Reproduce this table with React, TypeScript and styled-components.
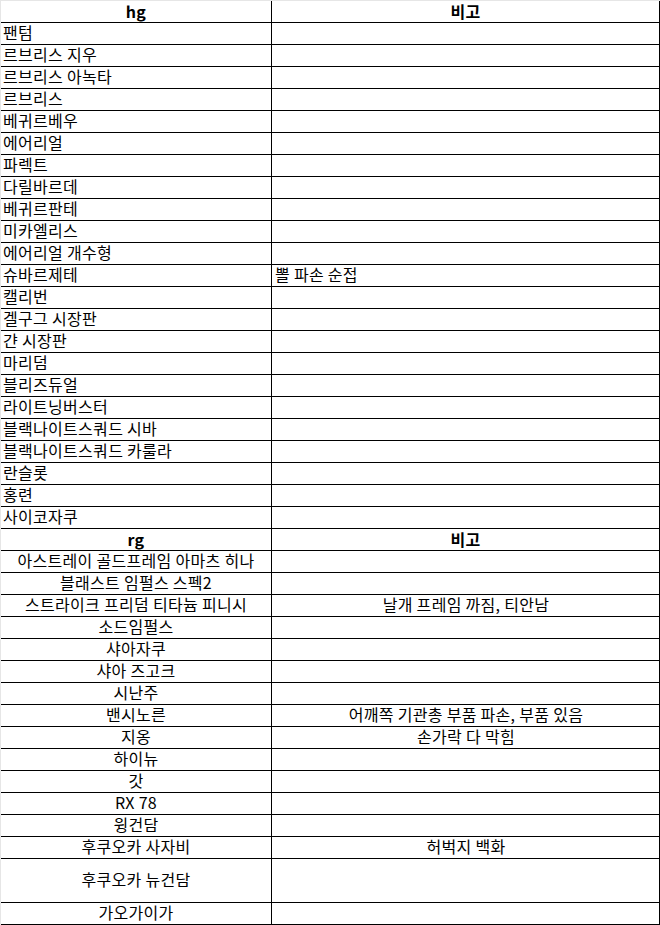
import React from "react";
import styled, { createGlobalStyle } from "styled-components";

const GlobalStyle = createGlobalStyle`
  html, body {
    margin: 0;
    padding: 0;
    background: #fff;
  }
  body {
    font-family: "Noto Sans CJK KR", "Noto Sans", sans-serif;
    color: #000;
  }
`;

const Sheet = styled.div`
  width: 660px;
  border-top: 1px solid #e6e6e6;
  border-left: 1px solid #e6e6e6;
  box-sizing: border-box;
`;

const Row = styled.div<{ $tall?: boolean }>`
  display: grid;
  grid-template-columns: 271px 388px;
  height: ${(p) => (p.$tall ? 44 : 22)}px;
`;

const Cell = styled.div<{ $align?: "left" | "center" }>`
  box-sizing: border-box;
  border-right: 1px solid #000;
  border-bottom: 1px solid #000;
  display: flex;
  align-items: center;
  justify-content: ${(p) => (p.$align === "center" ? "center" : "flex-start")};
  padding: 0 2px 2px;
  font-size: 16px;
  letter-spacing: 0.3px;
  line-height: 19px;
  white-space: nowrap;
`;

const HeaderCell = styled(Cell)`
  justify-content: center;
  padding-bottom: 0;
  font-weight: 700;
`;

const RemarkCell = styled(Cell)`
  padding-left: 3px;
`;

type Item = { name: string; note?: string; tall?: boolean };

const hgItems: Item[] = [
  { name: "팬텀" },
  { name: "르브리스 지우" },
  { name: "르브리스 아녹타" },
  { name: "르브리스" },
  { name: "베귀르베우" },
  { name: "에어리얼" },
  { name: "파렉트" },
  { name: "다릴바르데" },
  { name: "베귀르판테" },
  { name: "미카엘리스" },
  { name: "에어리얼 개수형" },
  { name: "슈바르제테", note: "뽈 파손 순접" },
  { name: "캘리번" },
  { name: "겔구그 시장판" },
  { name: "갼 시장판" },
  { name: "마리덤" },
  { name: "블리즈듀얼" },
  { name: "라이트닝버스터" },
  { name: "블랙나이트스쿼드 시바" },
  { name: "블랙나이트스쿼드 카룰라" },
  { name: "란슬롯" },
  { name: "홍련" },
  { name: "사이코자쿠" },
];

const rgItems: Item[] = [
  { name: "아스트레이 골드프레임 아마츠 히나" },
  { name: "블래스트 임펄스 스펙2" },
  { name: "스트라이크 프리덤 티타늄 피니시", note: "날개 프레임 까짐, 티안남" },
  { name: "소드임펄스" },
  { name: "샤아자쿠" },
  { name: "샤아 즈고크" },
  { name: "시난주" },
  { name: "밴시노른", note: "어깨쪽 기관총 부품 파손, 부품 있음" },
  { name: "지옹", note: "손가락 다 막힘" },
  { name: "하이뉴" },
  { name: "갓" },
  { name: "RX 78" },
  { name: "윙건담" },
  { name: "후쿠오카 사자비", note: "허벅지 백화" },
  { name: "후쿠오카 뉴건담", tall: true },
  { name: "가오가이가" },
];

const Section = ({
  title,
  items,
  align,
}: {
  title: string;
  items: Item[];
  align: "left" | "center";
}) => (
  <>
    <Row>
      <HeaderCell>{title}</HeaderCell>
      <HeaderCell>비고</HeaderCell>
    </Row>
    {items.map((item) => (
      <Row key={item.name} $tall={item.tall}>
        <Cell $align={align}>{item.name}</Cell>
        <RemarkCell $align={align}>{item.note}</RemarkCell>
      </Row>
    ))}
  </>
);

const App = () => (
  <>
    <GlobalStyle />
    <Sheet>
      <Section title="hg" items={hgItems} align="left" />
      <Section title="rg" items={rgItems} align="center" />
    </Sheet>
  </>
);

export default App;
